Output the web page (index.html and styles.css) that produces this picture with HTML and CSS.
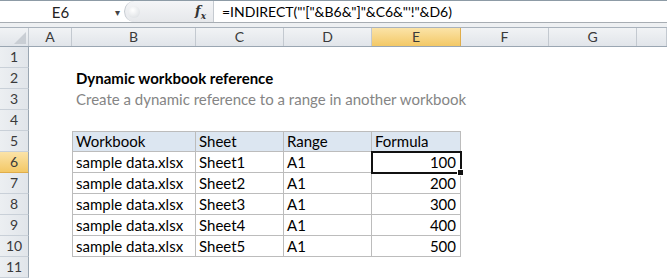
FILE: index.html
```
<!DOCTYPE html>
<html lang="en">
<head>
  <meta charset="UTF-8">
  <title>Dynamic workbook reference</title>
  <link rel="stylesheet" href="styles.css">
</head>
<body>

<div class="fbar">
  <div class="namebox">
    <span class="cellref">E6</span>
    <span class="drop">&#9662;</span>
  </div>
  <div class="fx-panel">
    <span class="knob"></span>
    <span class="fx">f<sub>x</sub></span>
  </div>
  <div class="formula">=INDIRECT("'["&amp;B6&amp;"]"&amp;C6&amp;"'!"&amp;D6)</div>
</div>

<div class="gap"></div>

<div class="sheet">
  <div class="row head">
    <div class="corner"><span class="tri"></span></div>
    <div class="ch">A</div><div class="ch">B</div><div class="ch">C</div><div class="ch">D</div>
    <div class="ch active">E</div><div class="ch">F</div><div class="ch">G</div><div class="ch"></div>
  </div>

  <div class="row"><div class="rh">1</div></div>

  <div class="row">
    <div class="rh">2</div><div></div>
    <div class="title">Dynamic workbook reference</div>
  </div>

  <div class="row">
    <div class="rh">3</div><div></div>
    <div class="subtitle">Create a dynamic reference to a range in another workbook</div>
  </div>

  <div class="row"><div class="rh">4</div></div>

  <div class="row">
    <div class="rh">5</div><div></div>
    <div class="tc th first">Workbook</div><div class="tc th">Sheet</div><div class="tc th">Range</div><div class="tc th">Formula</div>
  </div>

  <div class="row">
    <div class="rh active">6</div><div></div>
    <div class="tc first">sample data.xlsx</div><div class="tc">Sheet1</div><div class="tc">A1</div>
    <div class="tc num selected">100<span class="handle"></span></div>
  </div>

  <div class="row">
    <div class="rh">7</div><div></div>
    <div class="tc first">sample data.xlsx</div><div class="tc">Sheet2</div><div class="tc">A1</div><div class="tc num">200</div>
  </div>

  <div class="row">
    <div class="rh">8</div><div></div>
    <div class="tc first">sample data.xlsx</div><div class="tc">Sheet3</div><div class="tc">A1</div><div class="tc num">300</div>
  </div>

  <div class="row">
    <div class="rh">9</div><div></div>
    <div class="tc first">sample data.xlsx</div><div class="tc">Sheet4</div><div class="tc">A1</div><div class="tc num">400</div>
  </div>

  <div class="row">
    <div class="rh">10</div><div></div>
    <div class="tc first">sample data.xlsx</div><div class="tc">Sheet5</div><div class="tc">A1</div><div class="tc num">500</div>
  </div>

  <div class="row"><div class="rh">11</div></div>
</div>

</body>
</html>
```

FILE: styles.css
```
body {
  margin: 0;
  font-family: Lato, "Open Sans", sans-serif;
  font-size: 15px;
  color: #000;
  background: #fff;
  overflow: hidden;
}

/* formula bar */
.fbar {
  display: flex;
  height: 21px;
  border-top: 1px solid #8d9ba6;
  border-bottom: 1px solid #a7adb3;
  background: #fff;
}

.namebox {
  width: 124px;
  display: flex;
  align-items: center;
}

.cellref {
  flex: 1;
  text-align: center;
  color: #222;
  padding-left: 6px;
}

.drop {
  font-size: 10px;
  color: #444;
  margin-right: 4px;
}

.fx-panel {
  width: 88px;
  display: flex;
  align-items: center;
  justify-content: space-between;
  background: linear-gradient(#f4f5f7, #e6e8eb);
  border-radius: 11px 0 0 11px;
  border-left: 1px solid #c5cad0;
}

.knob {
  width: 12px;
  height: 12px;
  margin-left: 3px;
  border-radius: 50%;
  background: radial-gradient(circle at 40% 35%, #fff, #d6dade);
}

.fx {
  font-family: "DejaVu Serif", "Liberation Serif", serif;
  font-style: italic;
  font-weight: bold;
  font-size: 13px;
  color: #333;
  margin-right: 7px;
}

.fx sub {
  font-size: 9px;
}

.formula {
  flex: 1;
  padding-left: 8px;
  font-size: 14px;
  line-height: 21px;
  border-left: 1px solid #c5cad0;
  white-space: nowrap;
}

.gap {
  height: 4px;
  background: #eef0f2;
}

/* grid */
.row {
  display: grid;
  grid-template-columns: 29px 43px 124px 88px 88px 89px 88px 88px 1fr;
  height: 21px;
}

.row.head {
  height: 20px;
  border-top: 1px solid #a9b2bc;
  border-bottom: 1px solid #9aa6b2;
  box-sizing: border-box;
}

.corner,
.ch {
  background: linear-gradient(#f1f3f5, #e1e5ea);
  border-right: 1px solid #c3c9d0;
  text-align: center;
  line-height: 18px;
  color: #3a3a3a;
  font-size: 14px;
  box-sizing: border-box;
}

.corner {
  position: relative;
}

.corner .tri {
  position: absolute;
  right: 2px;
  bottom: 2px;
  width: 0;
  height: 0;
  border-left: 12px solid transparent;
  border-bottom: 12px solid #c9ced4;
}

.ch.active {
  background: linear-gradient(#fbe3a8, #f3c866);
  border-right-color: #e0ad4a;
}

.rh {
  background: linear-gradient(90deg, #eceff2, #e1e5ea);
  border-right: 1px solid #9aa6b2;
  border-bottom: 1px solid #c9d0d8;
  text-align: center;
  line-height: 20px;
  color: #3a3a3a;
  font-size: 14px;
  box-sizing: border-box;
}

.rh.active {
  background: linear-gradient(#fbe3a8, #f3c866);
  border-bottom-color: #e0ad4a;
}

.title {
  grid-column: 3 / -1;
  font-weight: bold;
  line-height: 21px;
  padding-left: 4px;
  white-space: nowrap;
}

.subtitle {
  grid-column: 3 / -1;
  color: #858585;
  line-height: 21px;
  padding-left: 4px;
  white-space: nowrap;
}

/* data table */
.tc {
  border-right: 1px solid #bcbcbc;
  border-bottom: 1px solid #bcbcbc;
  line-height: 20px;
  padding-left: 3px;
  box-sizing: border-box;
  white-space: nowrap;
}

.tc.first {
  border-left: 1px solid #bcbcbc;
}

.th {
  background: #dce6f1;
  border-top: 1px solid #bcbcbc;
  line-height: 19px;
}

.num {
  text-align: right;
  padding-right: 4px;
}

.selected {
  position: relative;
  outline: 2px solid #111;
  outline-offset: -1px;
}

.handle {
  position: absolute;
  right: -4px;
  bottom: -4px;
  width: 5px;
  height: 5px;
  background: #111;
  border: 1px solid #fff;
}
```
